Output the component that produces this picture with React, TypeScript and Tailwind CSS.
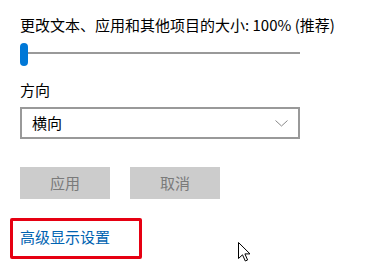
const font = { fontFamily: '"Noto Sans CJK SC", "Microsoft YaHei", sans-serif' }

function Cursor() {
  return (
    <svg width="13" height="20" viewBox="0 0 13 20" className="absolute left-[238px] top-[242px]">
      <path
        d="M0.5 0.5 L0.5 16.5 L4.5 12.8 L7.3 19 L9.6 18 L6.9 11.9 L12 11.9 Z"
        fill="#fff"
        stroke="#000"
        strokeWidth="1"
        strokeLinejoin="miter"
      />
    </svg>
  )
}

export default function App() {
  return (
    <main
      className="relative h-[278px] w-[372px] overflow-hidden bg-white pl-[20px] pt-[14px] text-[15px] text-black"
      style={font}
    >
      <p className="leading-[22px]">更改文本、应用和其他项目的大小: 100% (推荐)</p>

      <div className="relative mt-[7px] h-[23px] w-[280px]">
        <div className="absolute left-0 right-0 top-[9px] h-[2px] bg-[#999999]" />
        <div className="absolute left-0 top-0 h-[23px] w-[8px] rounded-full bg-[#0078d7]" />
      </div>

      <p className="mt-[13px] leading-[22px]">方向</p>

      <div className="mt-[6px] flex h-[32px] w-[280px] items-center justify-between border-2 border-[#999999] pl-[10px] pr-[10px]">
        <span className="leading-[22px]">横向</span>
        <svg width="13" height="7" viewBox="0 0 13 7">
          <polyline points="0.5,0.5 6.5,6 12.5,0.5" fill="none" stroke="#888888" strokeWidth="1" />
        </svg>
      </div>

      <div className="mt-[28px] flex gap-[20px]">
        <button className="h-[32px] w-[90px] bg-[#cccccc] text-[#7a7a7a]">应用</button>
        <button className="h-[32px] w-[90px] bg-[#cccccc] text-[#7a7a7a]">取消</button>
      </div>

      <div className="-ml-[10px] mt-[19px] flex h-[41px] w-[132px] items-start rounded-[2px] border-[3px] border-[#e60012] pl-[7px] pt-[5px]">
        <a href="#" className="leading-[22px] text-[#0063b1]">高级显示设置</a>
      </div>

      <Cursor />
    </main>
  )
}
